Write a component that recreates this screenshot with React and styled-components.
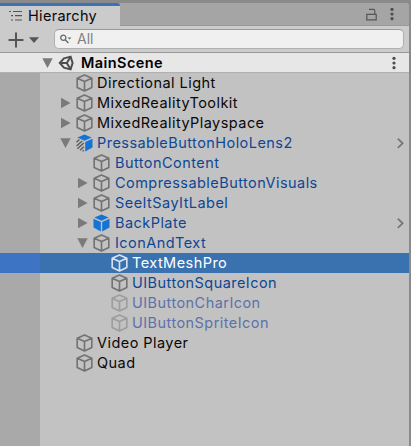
import React from 'react';
import styled, { createGlobalStyle, css } from 'styled-components';

const Global = createGlobalStyle`
  * { box-sizing: border-box; }
  body { margin: 0; background: #8a8a8a; overflow: hidden; }
`;

const Window = styled.main`
  width: 411px;
  height: 446px;
  padding: 3px 2px 0 0;
  background: #8a8a8a;
  font: 14.5px/20px Inter, "Liberation Sans", sans-serif;
  color: #090909;
  svg { display: block; flex: none; }
`;
const Panel = styled.section`
  display: flex;
  flex-direction: column;
  height: 443px;
  background: #c2c2c2;
  border-top-right-radius: 4px;
  overflow: hidden;
`;
const TabBar = styled.header`
  display: flex;
  height: 23px;
  flex: none;
  background: #a5a5a5;
`;
const Tab = styled.div`
  display: flex;
  align-items: center;
  width: 120px;
  height: 24px;
  padding: 0 0 2px 9px;
  gap: 6px;
  background: #cbcbcb;
  border-top: 3px solid #3a72b8;
  border-top-right-radius: 3px;
`;
const TabTitle = styled.span`
  letter-spacing: 0.3px;
`;
const TabActions = styled.div`
  display: flex;
  flex: 1;
  align-items: center;
  justify-content: flex-end;
  gap: 13px;
  padding: 0 15px 0 0;
  border-bottom: 1px solid #999;
`;
const Toolbar = styled.div`
  display: flex;
  align-items: center;
  height: 27px;
  flex: none;
  padding: 0 5px 0 8px;
  background: #cbcbcb;
  border-bottom: 1px solid #999;
`;
const AddButton = styled.div`
  display: flex;
  align-items: center;
  gap: 5px;
  width: 46px;
  padding-top: 2px;
`;
const Search = styled.label`
  display: flex;
  align-items: center;
  flex: 1;
  height: 20px;
  padding-left: 5px;
  gap: 4px;
  font-size: 14px;
  color: #818181;
  background: #f0f0f0;
  border: 1px solid #b0b0b0;
  border-top-color: #999;
  border-radius: 5px;
`;
const SceneRow = styled.div`
  display: flex;
  align-items: center;
  height: 20px;
  flex: none;
  padding: 0 13px 0 42px;
  gap: 4px;
  background: #e7e7e7;
  border-bottom: 1px solid #b0b0b0;
  font-weight: 600;
  color: #000;
`;
const SceneName = styled.span`
  flex: 1;
  padding-left: 2px;
  letter-spacing: 0.42px;
`;
const Tree = styled.div`
  flex: 1;
  background: linear-gradient(to right, #a9a9a9 40px, #c2c2c2 40px);
`;
const tones = { black: '#090909', blue: '#0f4694', muted: '#5c72a8', white: '#fff' };
const Row = styled.div`
  display: flex;
  align-items: center;
  height: 20px;
  padding-left: ${p => p.$indent}px;
  padding-right: 5px;
  color: ${p => tones[p.$tone]};
  ${p => p.$selected && css`
    background: linear-gradient(to right, #3e74c4 40px, #3a72b0 40px);
  `}
`;
const Toggle = styled.span`
  display: flex;
  justify-content: center;
  width: 12px;
  margin-right: 4px;
`;
const Name = styled.span`
  flex: 1;
  padding-left: ${p => p.$gap}px;
  white-space: nowrap;
  letter-spacing: 0.45px;
`;

const Arrow = ({ open }) => (
  <svg width="12" height="12" viewBox="0 0 12 12" fill="#7a7a7a">
    <path d={open ? 'M.3 1.2h10.4L5.5 11z' : 'M1 .8V11.2L10.6 6z'} />
  </svg>
);

const Cube = ({ kind }) => {
  const stroke = { white: '#d7e3f0', faded: '#9d9d9d' }[kind] || '#737373';
  if (kind === 'prefab' || kind === 'variant') {
    return (
      <svg width="17" height="18" viewBox="0 0 17 18">
        <path d="M8.5 .5 15.6 3.6 8.5 6.8 1.4 3.6z" fill="#1673d6" />
        <path d="M9.2 8 16.5 4.8v8.6L9.2 17.4z" fill="#1673d6" />
        {kind === 'prefab'
          ? <path d="M.5 4.8 7.8 8v9.4L.5 13.4z" fill="#1673d6" />
          : <path d="M.5 8.2 3.4 5.6M.5 12 6.2 6.9M1.4 14.8 7.8 9M4.1 16.2 7.8 12.8M6.6 17.3l1.2-1.1" stroke="#5c5c5c" strokeWidth="1.4" fill="none" />}
      </svg>
    );
  }
  return (
    <svg width="17" height="18" viewBox="0 0 17 18" fill="none" stroke={stroke} strokeWidth="1.65" strokeLinejoin="round">
      <path d="M8.5 1 15.8 4.2v9.2L8.5 17 1.2 13.4V4.2zM1.2 4.2 8.5 7.6l7.3-3.4M8.5 7.6V17" />
    </svg>
  );
};
const Kebab = () => (
  <svg width="4" height="14" viewBox="0 0 4 14" fill="#4d4d4d">
    <circle cx="2" cy="2.3" r="1.6" /><circle cx="2" cy="7" r="1.6" /><circle cx="2" cy="11.7" r="1.6" />
  </svg>
);
const Chevron = () => (
  <svg width="7" height="12" viewBox="0 0 7 12" fill="none" stroke="#777" strokeWidth="1.8"><path d="m.8 1.7 4.8 4.6L.8 10.9" /></svg>
);
const ListIcon = () => (
  <svg width="13" height="12" viewBox="0 0 13 12" stroke="#555" strokeWidth="1.2">
    <path d="M0 1.5h2M4 1.5h9M2 5.7h2M6 5.7h7M2 10h2M6 10h7" />
  </svg>
);
const Lock = () => (
  <svg width="11" height="13" viewBox="0 0 11 13" fill="none" stroke="#555" strokeWidth="1.2">
    <path d="M.8 6.4h9.4v5.4H.8zM3 1.4h4.4q1.4 0 1.4 1.6v3.4" />
  </svg>
);
const SceneIcon = () => (
  <svg width="17" height="16" viewBox="0 0 17 16" fill="none" stroke="#4d4d4d" strokeWidth="2">
    <path d="M5.9 3.4 12.6 1.6 14.6 8l-2 6.4-6.7-1.8L1.8 8z" />
    <path d="M1.8 8h7M8.8 8l3.8-6.2M8.8 8l3.8 6.2" />
  </svg>
);

const items = [
  ['Directional Light', 0, '', 'black'],
  ['MixedRealityToolkit', 0, 'closed', 'black'],
  ['MixedRealityPlayspace', 0, 'closed', 'black'],
  ['PressableButtonHoloLens2', 0, 'open', 'blue', 'variant'],
  ['ButtonContent', 1, '', 'blue'],
  ['CompressableButtonVisuals', 1, 'closed', 'blue'],
  ['SeeItSayItLabel', 1, 'closed', 'blue'],
  ['BackPlate', 1, 'closed', 'blue', 'prefab'],
  ['IconAndText', 1, 'open', 'blue'],
  ['TextMeshPro', 2, '', 'white', 'white'],
  ['UIButtonSquareIcon', 2, '', 'blue'],
  ['UIButtonCharIcon', 2, '', 'muted', 'faded'],
  ['UIButtonSpriteIcon', 2, '', 'muted', 'faded'],
  ['Video Player', 0, '', 'black'],
  ['Quad', 0, '', 'black'],
];
const levels = [
  { indent: 60, gap: 4 },
  { indent: 77, gap: 5 },
  { indent: 95, gap: 4 },
];

export default function App() {
  return (
    <Window>
      <Global />
      <Panel>
        <TabBar>
          <Tab><ListIcon /><TabTitle>Hierarchy</TabTitle></Tab>
          <TabActions><Lock /><Kebab /></TabActions>
        </TabBar>
        <Toolbar>
          <AddButton>
            <svg width="16" height="16" viewBox="0 0 16 16" stroke="#555" strokeWidth="2"><path d="M8 .5v15M.5 8h15" /></svg>
            <svg width="10" height="6" viewBox="0 0 10 6" fill="#555"><path d="M0 .3h10L5 6z" /></svg>
          </AddButton>
          <Search>
            <svg width="13" height="10" viewBox="0 0 13 10" fill="none" stroke="#666" strokeWidth="1.3">
              <circle cx="3.3" cy="3.8" r="2.6" /><path d="m5.2 5.7 3.2 3.3" /><path d="M7.6 3.4h3.8L9.5 5.6z" fill="#666" stroke="none" />
            </svg>
            All
          </Search>
        </Toolbar>
        <SceneRow>
          <Arrow open />
          <SceneIcon />
          <SceneName>MainScene</SceneName>
          <Kebab />
        </SceneRow>
        <Tree>
          {items.map(([name, depth, toggle, tone, kind]) => (
            <Row key={name} $indent={levels[depth].indent} $tone={tone} $selected={tone === 'white'}>
              <Toggle>{toggle && <Arrow open={toggle === 'open'} />}</Toggle>
              <Cube kind={kind} />
              <Name $gap={levels[depth].gap}>{name}</Name>
              {(kind === 'variant' || kind === 'prefab') && <Chevron />}
            </Row>
          ))}
        </Tree>
      </Panel>
    </Window>
  );
}
